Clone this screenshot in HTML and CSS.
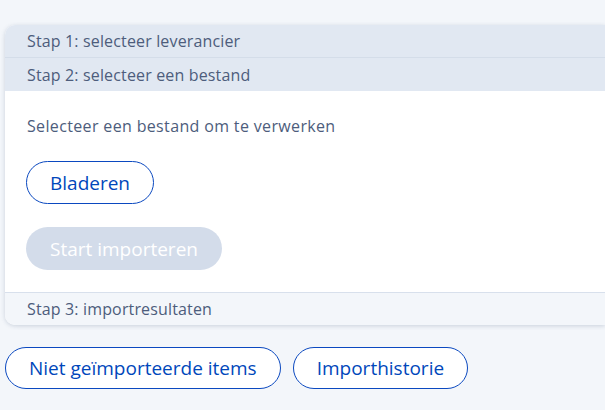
FILE: index.html
```html
<!DOCTYPE html>
<html>
<head>
<meta charset="utf-8">
<link rel="stylesheet" href="styles.css">
</head>
<body>
<div class="page">
  <div class="card">
    <div class="step step-top">Stap 1: selecteer leverancier</div>
    <div class="step step-active">Stap 2: selecteer een bestand</div>
    <div class="content">
      <p class="hint">Selecteer een bestand om te verwerken</p>
      <button class="btn btn-outline">Bladeren</button>
      <button class="btn btn-disabled" disabled>Start importeren</button>
    </div>
    <div class="step step-bottom">Stap 3: importresultaten</div>
  </div>
  <div class="actions">
    <button class="btn btn-outline">Niet geïmporteerde items</button>
    <button class="btn btn-outline">Importhistorie</button>
  </div>
</div>
</body>
</html>
```
FILE: styles.css
```css
html, body {
  margin: 0;
  padding: 0;
  background: #f3f6fa;
  font-family: "Open Sans", "Liberation Sans", sans-serif;
  overflow: hidden;
}
.page {
  padding: 25px 0 0 5px;
}
.card {
  border-radius: 10px 0 0 10px;
  background: #ffffff;
  box-shadow: 0 1px 4px rgba(60, 80, 120, 0.22);
  overflow: hidden;
}
.step {
  height: 33px;
  box-sizing: border-box;
  padding: 0 22px;
  display: flex;
  align-items: center;
  font-size: 16px;
  letter-spacing: 0.15px;
  color: #4d5d7c;
}
.step-top {
  background: #e1e8f2;
  border-bottom: 1px solid #d4dde9;
}
.step-active {
  background: #e1e8f2;
}
.step-bottom {
  background: #f3f6fa;
  border-top: 1px solid #d8e0ec;
}
.content {
  padding: 26px 21px 22px;
  display: flex;
  flex-direction: column;
  align-items: flex-start;
}
.hint {
  margin: 0 0 25px 1px;
  font-size: 16px;
  letter-spacing: 0.35px;
  color: #4d5d7c;
  line-height: 19px;
}
.btn {
  height: 43px;
  border-radius: 22px;
  font-family: inherit;
  font-size: 19px;
  letter-spacing: 0;
  padding: 0 23px;
  box-sizing: border-box;
  cursor: pointer;
}
.btn-outline {
  background: #ffffff;
  border: 1px solid #0b49c0;
  color: #0047bb;
}
.btn-disabled {
  margin-top: 23px;
  padding: 0 24px;
  background: #d3dcea;
  border: none;
  color: #ffffff;
}
.actions {
  display: flex;
  gap: 12px;
  margin-top: 22px;
}
.actions .btn {
  height: 42px;
}
```
